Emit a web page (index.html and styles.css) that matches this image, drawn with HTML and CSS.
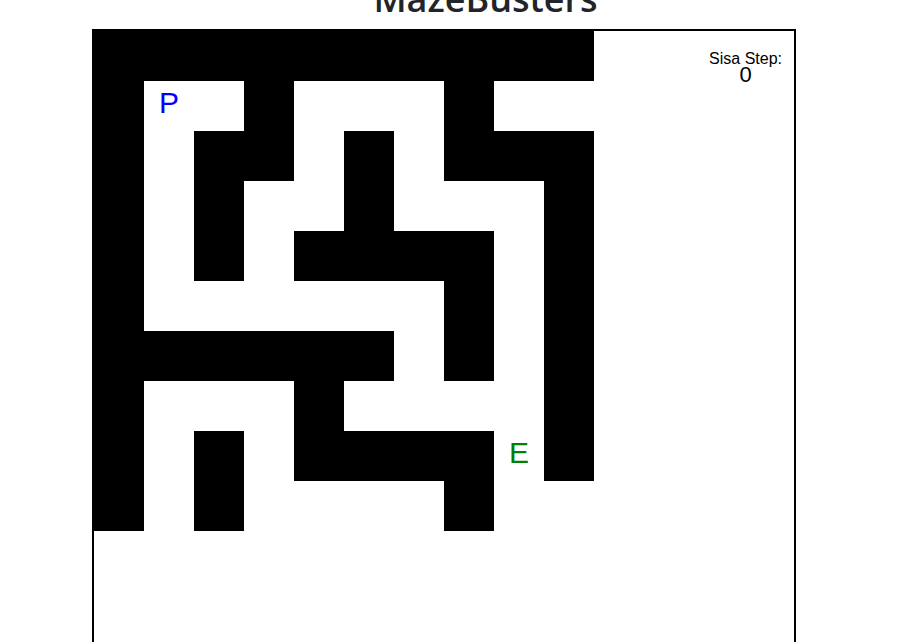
FILE: index.html
```html
<!DOCTYPE html>
<html>
<head>
<meta charset="utf-8">
<link rel="stylesheet" href="styles.css">
<title>MazeBusters</title>
</head>
<body>
<h1 class="title">MazeBusters</h1>
<div class="board">
  <div class="maze">
    <div class="w"></div><div class="w"></div><div class="w"></div><div class="w"></div><div class="w"></div><div class="w"></div><div class="w"></div><div class="w"></div><div class="w"></div><div class="w"></div>
    <div class="w"></div><div class="o player">P</div><div class="o"></div><div class="w"></div><div class="o"></div><div class="o"></div><div class="o"></div><div class="w"></div><div class="o"></div><div class="o"></div>
    <div class="w"></div><div class="o"></div><div class="w"></div><div class="w"></div><div class="o"></div><div class="w"></div><div class="o"></div><div class="w"></div><div class="w"></div><div class="w"></div>
    <div class="w"></div><div class="o"></div><div class="w"></div><div class="o"></div><div class="o"></div><div class="w"></div><div class="o"></div><div class="o"></div><div class="o"></div><div class="w"></div>
    <div class="w"></div><div class="o"></div><div class="w"></div><div class="o"></div><div class="w"></div><div class="w"></div><div class="w"></div><div class="w"></div><div class="o"></div><div class="w"></div>
    <div class="w"></div><div class="o"></div><div class="o"></div><div class="o"></div><div class="o"></div><div class="o"></div><div class="o"></div><div class="w"></div><div class="o"></div><div class="w"></div>
    <div class="w"></div><div class="w"></div><div class="w"></div><div class="w"></div><div class="w"></div><div class="w"></div><div class="o"></div><div class="w"></div><div class="o"></div><div class="w"></div>
    <div class="w"></div><div class="o"></div><div class="o"></div><div class="o"></div><div class="w"></div><div class="o"></div><div class="o"></div><div class="o"></div><div class="o"></div><div class="w"></div>
    <div class="w"></div><div class="o"></div><div class="w"></div><div class="o"></div><div class="w"></div><div class="w"></div><div class="w"></div><div class="w"></div><div class="o exit">E</div><div class="w"></div>
    <div class="w"></div><div class="o"></div><div class="w"></div><div class="o"></div><div class="o"></div><div class="o"></div><div class="o"></div><div class="w"></div><div class="o"></div><div class="o"></div>
  </div>
  <div class="steps">
    <div class="steps-label">Sisa Step:</div>
    <div class="steps-value">0</div>
  </div>
</div>
</body>
</html>
```
FILE: styles.css
```css
html, body {
  margin: 0;
  padding: 0;
  background: #ffffff;
}
body {
  font-family: "Liberation Sans", Arial, sans-serif;
  overflow: hidden;
}
.title {
  margin: -24px 0 8px 0;
  padding-left: 50px;
  text-align: center;
  font-family: "Open Sans", sans-serif;
  font-weight: 600;
  font-size: 36px;
  line-height: 45px;
  color: #212529;
}
.board {
  position: relative;
  margin-left: 92px;
  width: 700px;
  height: 700px;
  border: 2px solid #000;
}
.maze {
  display: grid;
  grid-template-columns: repeat(10, 50px);
  grid-auto-rows: 50px;
  width: 500px;
}
.w {
  background: #000;
}
.o {
  background: #fff;
  display: flex;
  align-items: center;
  justify-content: center;
  font-size: 30px;
  padding-bottom: 6px;
  box-sizing: border-box;
}
.player {
  color: #0000ff;
}
.exit {
  color: #008000;
}
.steps {
  position: absolute;
  top: 19px;
  right: 12px;
  text-align: center;
  color: #000;
}
.steps-label {
  font-size: 16px;
  line-height: 18px;
}
.steps-value {
  font-size: 22px;
  line-height: 22px;
  margin-top: -4px;
}
```
